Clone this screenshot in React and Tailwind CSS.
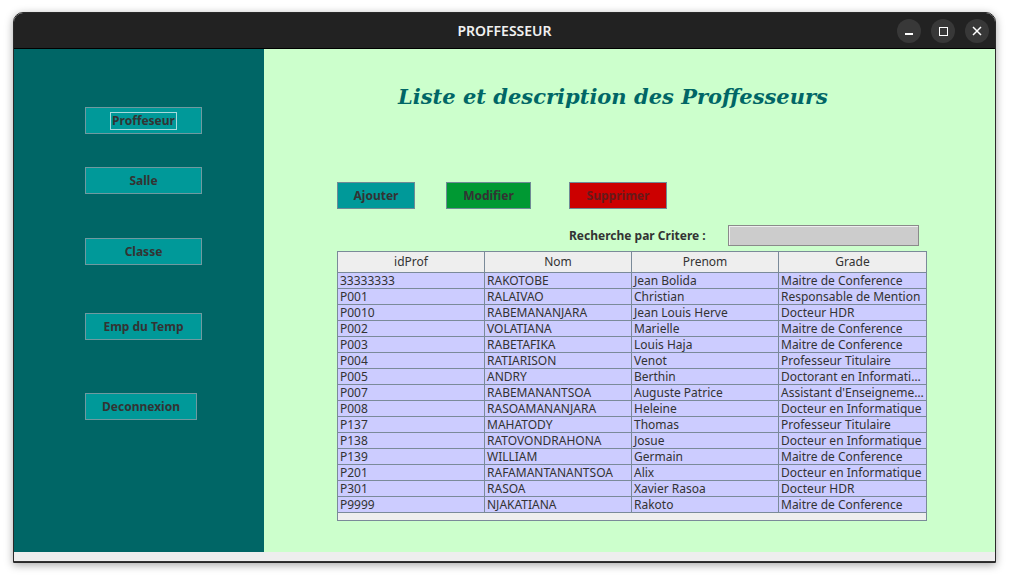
import React from "react";

const profs = [
  ["33333333", "RAKOTOBE", "Jean Bolida", "Maitre de Conference"],
  ["P001", "RALAIVAO", "Christian", "Responsable de Mention"],
  ["P0010", "RABEMANANJARA", "Jean Louis Herve", "Docteur HDR"],
  ["P002", "VOLATIANA", "Marielle", "Maitre de Conference"],
  ["P003", "RABETAFIKA", "Louis Haja", "Maitre de Conference"],
  ["P004", "RATIARISON", "Venot", "Professeur Titulaire"],
  ["P005", "ANDRY", "Berthin", "Doctorant en Informatique"],
  ["P007", "RABEMANANTSOA", "Auguste Patrice", "Assistant d'Enseignement"],
  ["P008", "RASOAMANANJARA", "Heleine", "Docteur en Informatique"],
  ["P137", "MAHATODY", "Thomas", "Professeur Titulaire"],
  ["P138", "RATOVONDRAHONA", "Josue", "Docteur en Informatique"],
  ["P139", "WILLIAM", "Germain", "Maitre de Conference"],
  ["P201", "RAFAMANTANANTSOA", "Alix", "Docteur en Informatique"],
  ["P301", "RASOA", "Xavier Rasoa", "Docteur HDR"],
  ["P9999", "NJAKATIANA", "Rakoto", "Maitre de Conference"],
];

const columns = ["idProf", "Nom", "Prenom", "Grade"];

const SideButton = ({ label, width = "w-[117px]", focused, className = "" }) => (
  <button
    className={`${width} h-[27px] bg-[#009999] border border-[#6f9aa0] text-[12px] font-bold text-[#333333] flex items-center justify-center ${className}`}
  >
    {focused ? (
      <span className="border border-[#a9d9dc] px-[1px] leading-[16px]">{label}</span>
    ) : (
      label
    )}
  </button>
);

const App = () => {
  return (
    <div
      className="w-[1009px] h-[579px] bg-white pt-[12px] pl-[13px]"
      style={{ fontFamily: '"Noto Sans", "Open Sans", sans-serif' }}
    >
      <div className="w-[983px] h-[551px] rounded-t-[10px] overflow-hidden border border-[#2a2a2a] flex flex-col shadow-[0_2px_8px_rgba(0,0,0,0.35)]">
        {/* Title bar */}
        <div className="h-[36px] bg-[#222222] flex items-center relative border-b border-black">
          <div className="flex-1 text-center text-[14px] font-semibold text-[#f0f0f0]">
            PROFFESSEUR
          </div>
          <div className="absolute right-[6px] top-[6px] flex gap-[10px]">
            <div className="w-[24px] h-[24px] rounded-full bg-[#383838] flex items-center justify-center">
              <div className="w-[8px] h-[1.5px] bg-white mt-[6px]"></div>
            </div>
            <div className="w-[24px] h-[24px] rounded-full bg-[#383838] flex items-center justify-center">
              <div className="w-[9px] h-[9px] border-[1.5px] border-white"></div>
            </div>
            <div className="w-[24px] h-[24px] rounded-full bg-[#383838] flex items-center justify-center">
              <svg width="10" height="10" viewBox="0 0 10 10">
                <path d="M1 1L9 9M9 1L1 9" stroke="white" strokeWidth="1.5" />
              </svg>
            </div>
          </div>
        </div>

        {/* Body */}
        <div className="flex h-[503px]">
          <aside className="w-[250px] bg-[#006666] pl-[71px] pt-[58px] flex flex-col items-start">
            <SideButton label="Proffeseur" focused />
            <SideButton label="Salle" className="mt-[33px]" />
            <SideButton label="Classe" className="mt-[44px]" />
            <SideButton label="Emp du Temp" className="mt-[48px]" />
            <SideButton label="Deconnexion" width="w-[112px]" className="mt-[53px]" />
          </aside>

          <main className="flex-1 bg-[#ccffcc] pl-[73px] pt-[34px]">
            <h1
              className="ml-[61px] h-[28px] leading-[28px] text-[21px] font-bold italic text-[#006666]"
              style={{ fontFamily: '"DejaVu Serif", serif' }}
            >
              Liste et description des Proffesseurs
            </h1>

            <div className="flex mt-[71px]">
              <button className="w-[78px] h-[27px] bg-[#009999] border border-[#6f8a96] text-[12px] font-bold text-[#333333]">
                Ajouter
              </button>
              <button className="ml-[31px] w-[85px] h-[27px] bg-[#009933] border border-[#6f8a96] text-[12px] font-bold text-[#333333]">
                Modifier
              </button>
              <button className="ml-[38px] w-[98px] h-[27px] bg-[#cc0000] border border-[#6f8a96] text-[12px] font-bold text-[#661a1a]">
                Supprimer
              </button>
            </div>

            <div className="flex items-center mt-[16px] h-[21px]">
              <span className="ml-[232px] text-[12px] font-bold text-[#333333]">
                Recherche par Critere :
              </span>
              <div className="ml-[22px] w-[191px] h-[21px] bg-[#cccccc] border border-[#8a8a8a] shadow-[inset_1px_1px_0_#eeeeee]"></div>
            </div>

            <div className="mt-[5px] w-[590px] border border-[#7a8a99] bg-[#eeeeee] text-[12px] text-[#333333]">
              <div className="grid grid-cols-4 h-[21px] border-b border-[#7a8a99] bg-[#eeeeee]">
                {columns.map((c, i) => (
                  <div
                    key={c}
                    className={`flex items-center justify-center ${i < 3 ? "border-r border-[#7a8a99]" : ""}`}
                  >
                    {c}
                  </div>
                ))}
              </div>
              {profs.map((row) => (
                <div key={row[0]} className="grid grid-cols-4 h-[16px] border-b border-[#7a8a99] bg-[#ccccff]">
                  {row.map((cell, i) => (
                    <div
                      key={i}
                      className={`pl-[2px] leading-[15px] whitespace-nowrap overflow-hidden text-ellipsis ${i < 3 ? "border-r border-[#7a8a99]" : ""}`}
                    >
                      {cell}
                    </div>
                  ))}
                </div>
              ))}
              <div className="h-[7px] bg-[#eeeeee]"></div>
            </div>
          </main>
        </div>

        <div className="h-[10px] bg-[#eeeeee] border-b border-[#333333]"></div>
      </div>
    </div>
  );
};

export default App;
